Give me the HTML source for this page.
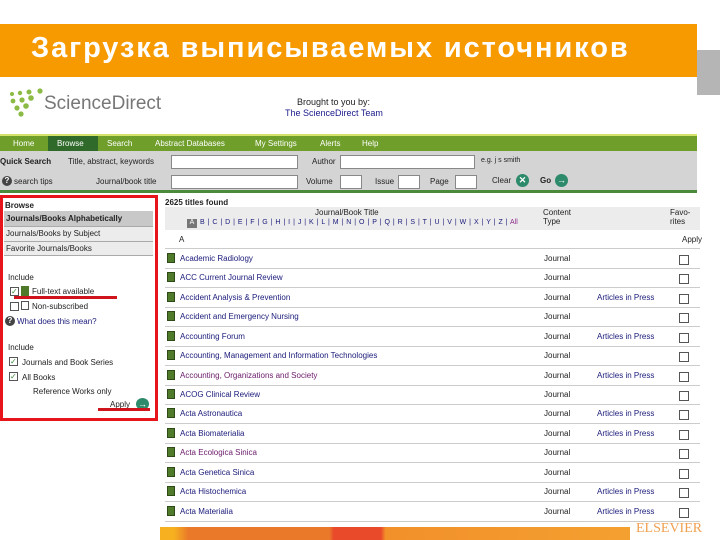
<!DOCTYPE html>
<html><head><meta charset="utf-8"><style>
*{margin:0;padding:0;box-sizing:border-box}
body{width:720px;height:540px;position:relative;overflow:hidden;background:#fff;font-family:"Liberation Sans",sans-serif;font-size:8px;color:#222}
.a{position:absolute;white-space:nowrap}
.t{font-size:8px}
.blue{color:#1a1a7a}
.row{position:absolute;left:165px;width:535px;height:1px;background:#ccc}
.bk{position:absolute;left:167px;width:8px;height:10px;background:#4f7a2a;border:1px solid #2e4a17}
.cb{position:absolute;left:679px;width:10px;height:10px;border:1px solid #555;background:#fff}
.inp{position:absolute;height:14px;background:#fff;border:1px solid #888}
</style></head><body>
<div class="a" style="left:697px;top:50px;width:23px;height:45px;background:#b5b5b5"></div>
<div class="a" style="left:0;top:24px;width:697px;height:53px;background:#f79a00"></div>
<div class="a" style="left:31px;top:32px;font-size:29px;font-weight:bold;color:#fff;letter-spacing:1.9px">Загрузка выписываемых источников</div>

<!-- logo -->
<svg class="a" style="left:4px;top:88px" width="44" height="30"><g fill="#8bbb45"><circle cx="8" cy="6" r="2"/><circle cx="16" cy="5" r="2.2"/><circle cx="25" cy="4" r="2.5"/><circle cx="36" cy="3" r="2.6"/><circle cx="9" cy="13" r="2.4"/><circle cx="18" cy="12" r="2.6"/><circle cx="27" cy="10" r="2.8"/><circle cx="13" cy="20" r="2.6"/><circle cx="22" cy="18" r="2.8"/><circle cx="17" cy="26" r="2.6"/></g></svg>
<div class="a" style="left:44px;top:93px;font-size:19px;color:#777">ScienceDirect</div>
<div class="a" style="left:297px;top:97px;font-size:9px;color:#222">Brought to you by:</div>
<div class="a" style="left:285px;top:108px;font-size:9px;color:#1a1a8a">The ScienceDirect Team</div>

<!-- nav -->
<div class="a" style="left:0;top:134px;width:697px;height:2px;background:#d6e36a"></div>
<div class="a" style="left:0;top:136px;width:697px;height:15px;background:#6f9e2a"></div>
<div class="a" style="left:48px;top:136px;width:50px;height:15px;background:#2f6a2a"></div>
<div class="a t" style="left:13px;top:139px;color:#fff">Home</div>
<div class="a t" style="left:57px;top:139px;color:#fff">Browse</div>
<div class="a t" style="left:107px;top:139px;color:#fff">Search</div>
<div class="a t" style="left:155px;top:139px;color:#fff">Abstract Databases</div>
<div class="a t" style="left:255px;top:139px;color:#fff">My Settings</div>
<div class="a t" style="left:320px;top:139px;color:#fff">Alerts</div>
<div class="a t" style="left:362px;top:139px;color:#fff">Help</div>
<div class="a" style="left:0;top:151px;width:697px;height:41px;background:#d4d4d4"></div>
<div class="a" style="left:0;top:190px;width:697px;height:3px;background:#4a8a3a"></div>
<div class="a t" style="left:0;top:157px;font-weight:bold">Quick Search</div>
<div class="a t" style="left:68px;top:157px">Title, abstract, keywords</div>
<div class="inp" style="left:171px;top:155px;width:127px"></div>
<div class="a t" style="left:312px;top:157px">Author</div>
<div class="inp" style="left:340px;top:155px;width:135px"></div>
<div class="a t" style="left:481px;top:157px;font-size:7px">e.g. j s smith</div>
<div class="a" style="left:2px;top:176px;width:10px;height:10px;border-radius:50%;background:#444;color:#fff;font-size:8px;font-weight:bold;text-align:center;line-height:10px">?</div>
<div class="a t" style="left:14px;top:177px">search tips</div>
<div class="a t" style="left:96px;top:177px">Journal/book title</div>
<div class="inp" style="left:171px;top:175px;width:127px"></div>
<div class="a t" style="left:306px;top:177px">Volume</div>
<div class="inp" style="left:340px;top:175px;width:22px"></div>
<div class="a t" style="left:375px;top:177px">Issue</div>
<div class="inp" style="left:398px;top:175px;width:22px"></div>
<div class="a t" style="left:430px;top:177px">Page</div>
<div class="inp" style="left:455px;top:175px;width:22px"></div>
<div class="a t" style="left:492px;top:176px">Clear</div>
<div class="a" style="left:516px;top:174px;width:13px;height:13px;border-radius:50%;background:#2d8a6a;color:#fff;font-size:9px;text-align:center;line-height:13px;font-weight:bold">✕</div>
<div class="a t" style="left:540px;top:176px;font-weight:bold">Go</div>
<div class="a" style="left:555px;top:174px;width:13px;height:13px;border-radius:50%;background:#2d8a6a;color:#fff;font-size:9px;text-align:center;line-height:13px;font-weight:bold">→</div>

<!-- left panel -->
<div class="a" style="left:0;top:195px;width:158px;height:226px;border:3px solid #e8141c"></div>
<div class="a t" style="left:5px;top:201px;font-weight:bold">Browse</div>
<div class="a" style="left:4px;top:211px;width:149px;height:15px;background:#c8c8c8"></div>
<div class="a t" style="left:6px;top:214px;font-weight:bold">Journals/Books Alphabetically</div>
<div class="a" style="left:4px;top:226px;width:149px;height:15px;background:#ececec;border-top:1px solid #aaa"></div>
<div class="a t" style="left:6px;top:229px">Journals/Books by Subject</div>
<div class="a" style="left:4px;top:241px;width:149px;height:15px;background:#ececec;border-top:1px solid #aaa;border-bottom:1px solid #aaa"></div>
<div class="a t" style="left:6px;top:244px">Favorite Journals/Books</div>
<div class="a t" style="left:8px;top:273px">Include</div>
<div class="a" style="left:10px;top:287px;width:9px;height:9px;border:1px solid #555;color:#3a8a3a;font-size:8px;line-height:7px">✓</div>
<div class="a" style="left:21px;top:286px;width:8px;height:10px;background:#4f7a2a"></div>
<div class="a t" style="left:32px;top:287px">Full-text available</div>
<div class="a" style="left:14px;top:296px;width:103px;height:3px;background:#d0141c"></div>
<div class="a" style="left:10px;top:302px;width:9px;height:9px;border:1px solid #555"></div>
<div class="a" style="left:21px;top:301px;width:8px;height:9px;border:1px solid #555"></div>
<div class="a t" style="left:32px;top:302px">Non-subscribed</div>
<div class="a" style="left:5px;top:316px;width:10px;height:10px;border-radius:50%;background:#444;color:#fff;font-size:8px;font-weight:bold;text-align:center;line-height:10px">?</div>
<div class="a t blue" style="left:17px;top:317px">What does this mean?</div>
<div class="a t" style="left:8px;top:343px">Include</div>
<div class="a" style="left:9px;top:357px;width:9px;height:9px;border:1px solid #555;color:#3a8a3a;font-size:8px;line-height:7px">✓</div>
<div class="a t" style="left:22px;top:358px">Journals and Book Series</div>
<div class="a" style="left:9px;top:372px;width:9px;height:9px;border:1px solid #555;color:#3a8a3a;font-size:8px;line-height:7px">✓</div>
<div class="a t" style="left:22px;top:373px">All Books</div>
<div class="a t" style="left:33px;top:387px">Reference Works only</div>
<div class="a t" style="left:110px;top:400px">Apply</div>
<div class="a" style="left:136px;top:398px;width:13px;height:12px;border-radius:50%;background:#2d8a6a;color:#fff;font-size:9px;text-align:center;line-height:12px">→</div>
<div class="a" style="left:98px;top:408px;width:52px;height:3px;background:#d0141c"></div>

<!-- list -->
<div class="a t" style="left:165px;top:198px;font-weight:bold">2625 titles found</div>
<div class="a" style="left:165px;top:207px;width:535px;height:23px;background:#ececec"></div>
<div class="a t" style="left:315px;top:208px">Journal/Book Title</div>
<div class="a t" style="left:543px;top:208px">Content<br>Type</div>
<div class="a t" style="left:670px;top:208px">Favo-<br>rites</div>
<div class="a" style="left:187px;top:219px;width:10px;height:9px;background:#777;color:#fff;font-size:7px;text-align:center">A</div>
<div class="a blue" style="left:200px;top:219px;font-size:7px;word-spacing:1px">B | C | D | E | F | G | H | I | J | K | L | M | N | O | P | Q | R | S | T | U | V | W | X | Y | Z | <span style="color:#8a2a8a">All</span></div>
<div class="a t" style="left:179px;top:235px">A</div>
<div class="a t" style="left:682px;top:235px">Apply</div>
<div class="row" style="top:248px"></div>
<div class="bk" style="top:253px"></div><div class="a t blue" style="left:180px;top:254px">Academic Radiology</div><div class="a t" style="left:544px;top:254px">Journal</div><div class="cb" style="top:255px"></div>
<div class="row" style="top:268px"></div>
<div class="bk" style="top:272px"></div><div class="a t blue" style="left:180px;top:273px">ACC Current Journal Review</div><div class="a t" style="left:544px;top:273px">Journal</div><div class="cb" style="top:274px"></div>
<div class="row" style="top:287px"></div>
<div class="bk" style="top:292px"></div><div class="a t blue" style="left:180px;top:293px">Accident Analysis &amp; Prevention</div><div class="a t" style="left:544px;top:293px">Journal</div><div class="a t blue" style="left:597px;top:293px">Articles in Press</div><div class="cb" style="top:294px"></div>
<div class="row" style="top:307px"></div>
<div class="bk" style="top:311px"></div><div class="a t blue" style="left:180px;top:312px">Accident and Emergency Nursing</div><div class="a t" style="left:544px;top:312px">Journal</div><div class="cb" style="top:313px"></div>
<div class="row" style="top:326px"></div>
<div class="bk" style="top:331px"></div><div class="a t blue" style="left:180px;top:332px">Accounting Forum</div><div class="a t" style="left:544px;top:332px">Journal</div><div class="a t blue" style="left:597px;top:332px">Articles in Press</div><div class="cb" style="top:333px"></div>
<div class="row" style="top:346px"></div>
<div class="bk" style="top:350px"></div><div class="a t blue" style="left:180px;top:351px">Accounting, Management and Information Technologies</div><div class="a t" style="left:544px;top:351px">Journal</div><div class="cb" style="top:352px"></div>
<div class="row" style="top:365px"></div>
<div class="bk" style="top:370px"></div><div class="a t" style="left:180px;top:371px;color:#6a1a6a">Accounting, Organizations and Society</div><div class="a t" style="left:544px;top:371px">Journal</div><div class="a t blue" style="left:597px;top:371px">Articles in Press</div><div class="cb" style="top:372px"></div>
<div class="row" style="top:385px"></div>
<div class="bk" style="top:389px"></div><div class="a t blue" style="left:180px;top:390px">ACOG Clinical Review</div><div class="a t" style="left:544px;top:390px">Journal</div><div class="cb" style="top:391px"></div>
<div class="row" style="top:404px"></div>
<div class="bk" style="top:408px"></div><div class="a t blue" style="left:180px;top:409px">Acta Astronautica</div><div class="a t" style="left:544px;top:409px">Journal</div><div class="a t blue" style="left:597px;top:409px">Articles in Press</div><div class="cb" style="top:410px"></div>
<div class="row" style="top:423px"></div>
<div class="bk" style="top:428px"></div><div class="a t blue" style="left:180px;top:429px">Acta Biomaterialia</div><div class="a t" style="left:544px;top:429px">Journal</div><div class="a t blue" style="left:597px;top:429px">Articles in Press</div><div class="cb" style="top:430px"></div>
<div class="row" style="top:443px"></div>
<div class="bk" style="top:447px"></div><div class="a t" style="left:180px;top:448px;color:#6a1a6a">Acta Ecologica Sinica</div><div class="a t" style="left:544px;top:448px">Journal</div><div class="cb" style="top:449px"></div>
<div class="row" style="top:462px"></div>
<div class="bk" style="top:467px"></div><div class="a t blue" style="left:180px;top:468px">Acta Genetica Sinica</div><div class="a t" style="left:544px;top:468px">Journal</div><div class="cb" style="top:469px"></div>
<div class="row" style="top:482px"></div>
<div class="bk" style="top:486px"></div><div class="a t blue" style="left:180px;top:487px">Acta Histochemica</div><div class="a t" style="left:544px;top:487px">Journal</div><div class="a t blue" style="left:597px;top:487px">Articles in Press</div><div class="cb" style="top:488px"></div>
<div class="row" style="top:501px"></div>
<div class="bk" style="top:506px"></div><div class="a t blue" style="left:180px;top:507px">Acta Materialia</div><div class="a t" style="left:544px;top:507px">Journal</div><div class="a t blue" style="left:597px;top:507px">Articles in Press</div><div class="cb" style="top:508px"></div>
<div class="row" style="top:521px"></div>

<div class="a" style="left:160px;top:527px;width:470px;height:13px;background:linear-gradient(90deg,#f6b020 0,#f6b020 3%,#ea7a2a 6%,#ea7a2a 36%,#e84a2a 37%,#e84a2a 47%,#f2902a 48%,#f4a030 100%)"></div>
<div class="a" style="left:636px;top:521px;font-family:'Liberation Serif',serif;font-size:14px;color:#f0a050">ELSEVIER</div>
</body></html>
